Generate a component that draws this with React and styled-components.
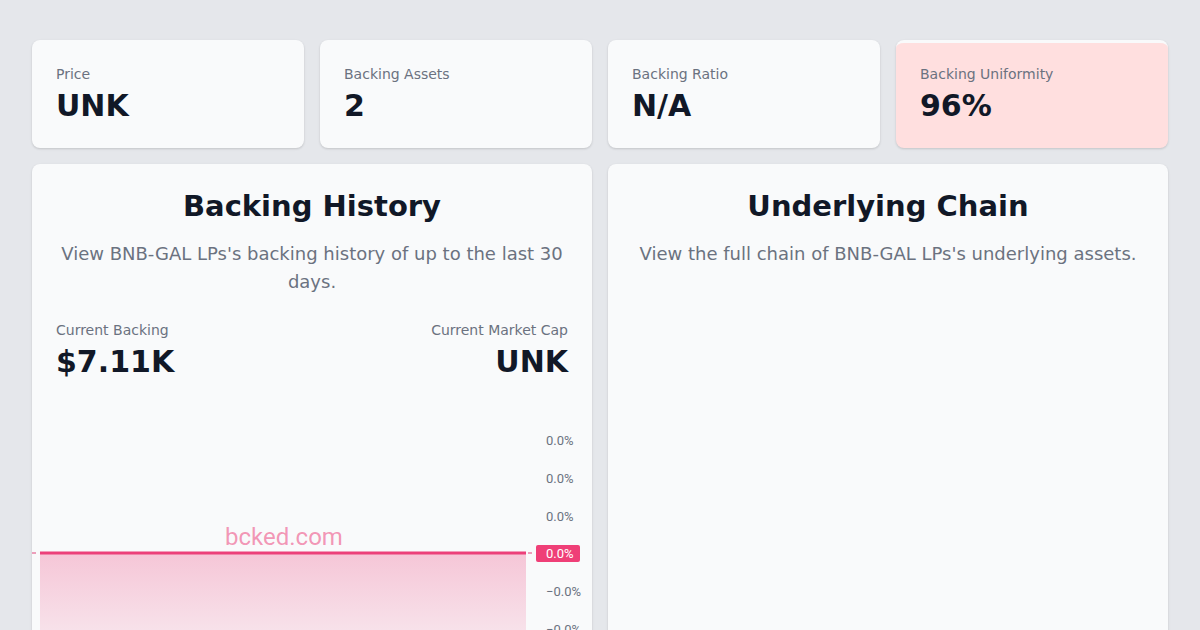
import React from 'react';
import styled, { createGlobalStyle } from 'styled-components';

const GlobalStyle = createGlobalStyle`
  html, body {
    margin: 0;
    padding: 0;
    background: #e5e7eb;
    font-family: "DejaVu Sans", "Noto Sans", sans-serif;
  }
`;

const Page = styled.div`
  padding: 40px 32px 0;
  display: flex;
  flex-direction: column;
  gap: 16px;
`;

const StatsRow = styled.div`
  display: grid;
  grid-template-columns: repeat(4, 1fr);
  gap: 16px;
`;

const StatCard = styled.div`
  background: ${p => (p.$warn ? '#ffdfdf' : '#f9fafb')};
  border-top: ${p => (p.$warn ? '3px solid #f9fafb' : 'none')};
  border-radius: 8px;
  box-shadow: 0 1px 3px rgba(0, 0, 0, 0.1), 0 1px 2px rgba(0, 0, 0, 0.06);
  padding: ${p => (p.$warn ? '21px' : '24px')} 24px 24px;
  height: 108px;
  box-sizing: border-box;
`;

const Label = styled.div`
  font-size: 14px;
  line-height: 20px;
  color: #6b7280;
  text-align: ${p => p.$align || 'left'};
`;

const Value = styled.div`
  margin-top: 4px;
  font-size: 30px;
  line-height: 36px;
  font-weight: 700;
  color: #111827;
  text-align: ${p => p.$align || 'left'};
`;

const Panels = styled.div`
  display: grid;
  grid-template-columns: 1fr 1fr;
  gap: 16px;
`;

const Panel = styled.div`
  background: #f9fafb;
  border-radius: 8px;
  box-shadow: 0 1px 3px rgba(0, 0, 0, 0.1), 0 1px 2px rgba(0, 0, 0, 0.06);
  overflow: hidden;
`;

const PanelHead = styled.div`
  padding: 24px 24px 0;
`;

const Title = styled.h2`
  margin: 0;
  font-size: 29px;
  line-height: 36px;
  font-weight: 700;
  color: #111827;
  text-align: center;
`;

const Sub = styled.p`
  margin: 16px 0 0;
  font-size: 18px;
  line-height: 28px;
  color: #6b7280;
  text-align: center;
`;

const Figures = styled.div`
  margin-top: 24px;
  display: flex;
  justify-content: space-between;
`;

const ChartWrap = styled.div`
  margin-top: 20px;
  height: 260px;
  svg {
    display: block;
  }
`;

const ticks = [
  { y: 40, t: '0.0%' },
  { y: 78, t: '0.0%' },
  { y: 116, t: '0.0%' },
  { y: 191, t: '\u22120.0%' },
  { y: 229, t: '\u22120.0%' },
];

const axisFont = "Roboto, 'Liberation Sans', sans-serif";

function Chart() {
  const lineY = 153;
  return (
    <svg width="560" height="260" viewBox="0 0 560 260">
      <defs>
        <linearGradient id="area" x1="0" y1="0" x2="0" y2="1">
          <stop offset="0" stopColor="#ec407a" stopOpacity="0.28" />
          <stop offset="1" stopColor="#ec407a" stopOpacity="0.05" />
        </linearGradient>
      </defs>
      <rect x="8" y={lineY} width="486" height="120" fill="url(#area)" />
      <line x1="0" y1={lineY} x2="504" y2={lineY} stroke="#e0457b" strokeWidth="1" strokeDasharray="4 4" />
      <line x1="8" y1={lineY} x2="494" y2={lineY} stroke="#ec407a" strokeWidth="3" />
      <text x="252" y="145" textAnchor="middle" fontFamily={axisFont} fontSize="24" fill="#ec407a" fillOpacity="0.55">
        bcked.com
      </text>
      {ticks.map((k, i) => (
        <text key={i} x="514" y={k.y + 4.5} fontFamily={axisFont} fontSize="13" fill="#6b7280">
          {k.t}
        </text>
      ))}
      <rect x="504" y={lineY - 8} width="44" height="17" rx="2" fill="#ef3f77" />
      <text x="514" y={lineY + 4.5} fontFamily={axisFont} fontSize="13" fill="#ffffff">
        0.0%
      </text>
    </svg>
  );
}

const stats = [
  { label: 'Price', value: 'UNK' },
  { label: 'Backing Assets', value: '2' },
  { label: 'Backing Ratio', value: 'N/A' },
  { label: 'Backing Uniformity', value: '96%', warn: true },
];

export default function App() {
  return (
    <>
      <GlobalStyle />
      <Page>
        <StatsRow>
          {stats.map(s => (
            <StatCard key={s.label} $warn={s.warn}>
              <Label>{s.label}</Label>
              <Value>{s.value}</Value>
            </StatCard>
          ))}
        </StatsRow>
        <Panels>
          <Panel>
            <PanelHead>
              <Title>Backing History</Title>
              <Sub>View BNB-GAL LPs's backing history of up to the last 30 days.</Sub>
              <Figures>
                <div>
                  <Label>Current Backing</Label>
                  <Value>$7.11K</Value>
                </div>
                <div>
                  <Label $align="right">Current Market Cap</Label>
                  <Value $align="right">UNK</Value>
                </div>
              </Figures>
            </PanelHead>
            <ChartWrap>
              <Chart />
            </ChartWrap>
          </Panel>
          <Panel>
            <PanelHead>
              <Title>Underlying Chain</Title>
              <Sub>View the full chain of BNB-GAL LPs's underlying assets.</Sub>
            </PanelHead>
          </Panel>
        </Panels>
      </Page>
    </>
  );
}
